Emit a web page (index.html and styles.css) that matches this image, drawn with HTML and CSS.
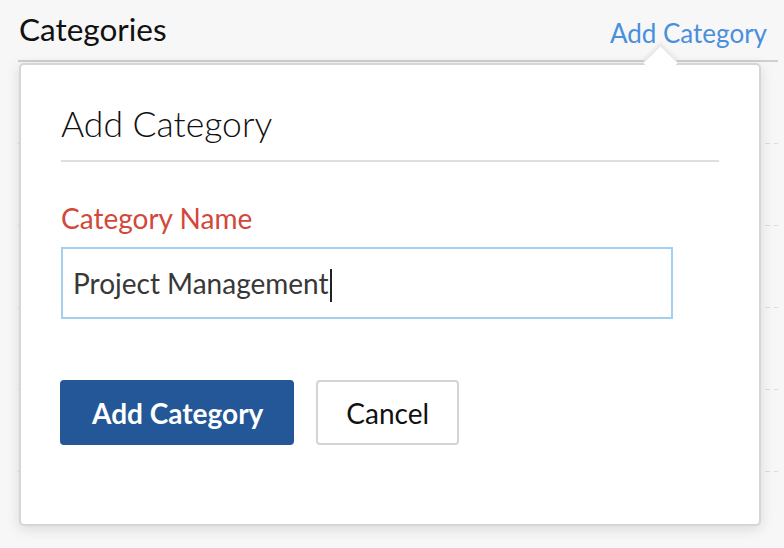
FILE: index.html
```html
<!DOCTYPE html>
<html lang="en">
<head>
<meta charset="utf-8">
<title>Categories</title>
<link rel="stylesheet" href="styles.css">
</head>
<body>
<div class="page">
  <header class="header">
    <h1 class="title">Categories</h1>
    <a class="add-link" href="#">Add Category</a>
  </header>
  <div class="content">
    <ul class="rows">
      <li class="row"></li>
      <li class="row"></li>
      <li class="row"></li>
      <li class="row"></li>
      <li class="row"></li>
    </ul>
    <div class="popover">
      <span class="arrow"></span>
      <h2 class="pop-title">Add Category</h2>
      <div class="field">
        <label class="label">Category Name</label>
        <div class="input">Project Management<span class="caret"></span></div>
      </div>
      <div class="actions">
        <button class="btn btn-primary" type="button">Add Category</button>
        <button class="btn btn-default" type="button">Cancel</button>
      </div>
    </div>
  </div>
</div>
</body>
</html>
```
FILE: styles.css
```css
html, body {
  margin: 0;
  padding: 0;
}
body {
  background: #f7f7f7;
  font-family: "Lato", "Liberation Sans", sans-serif;
  width: 784px;
  height: 548px;
  overflow: hidden;
}
.page {
  padding: 0 6px 0 18px;
}
.header {
  display: flex;
  justify-content: space-between;
  align-items: flex-start;
  height: 60px;
  border-bottom: 2px solid #cfcfcf;
  padding: 0 11px 0 1px;
  box-sizing: content-box;
}
.title {
  margin: 0;
  font-size: 31.5px;
  font-weight: 400;
  color: #111;
  line-height: 36px;
  padding-top: 11px;
}
.add-link {
  font-size: 26px;
  color: #4a8fdb;
  text-decoration: none;
  line-height: 30px;
  padding-top: 18px;
}
.content {
  position: relative;
}
.rows {
  list-style: none;
  margin: 0;
  padding: 0;
}
.row {
  height: 81px;
  background: repeating-linear-gradient(90deg, #dcdcdc 0 5px, transparent 5px 9px) bottom left / 100% 1px no-repeat;
  padding-bottom: 1px;
}
.popover {
  position: absolute;
  top: 1px;
  left: 1px;
  width: 738px;
  height: 459px;
  box-sizing: content-box;
  background: #fff;
  border: 2px solid #d6d6d6;
  border-radius: 5px;
  box-shadow: 0 3px 14px rgba(0, 0, 0, 0.12);
  padding: 0;
}
.arrow {
  position: absolute;
  top: -15px;
  left: 627px;
  width: 25px;
  height: 25px;
  background: #fff;
  transform: rotate(45deg);
  box-shadow: -2px -2px 4px rgba(0, 0, 0, 0.06);
  border-top: 1px solid #e2e2e2;
  border-left: 1px solid #e2e2e2;
  box-sizing: border-box;
}
.pop-title {
  position: relative;
  margin: 38px 40px 0;
  padding-bottom: 15px;
  border-bottom: 2px solid #dedede;
  font-size: 35.5px;
  font-weight: 300;
  color: #111;
  line-height: 42px;
}
.field {
  margin: 41px 40px 0;
}
.label {
  display: block;
  font-size: 28px;
  color: #d2483a;
  line-height: 31px;
}
.input {
  margin-top: 13px;
  width: 612px;
  height: 72px;
  box-sizing: border-box;
  border: 2px solid #a3cff0;
  padding: 0 10px;
  font-size: 28px;
  color: #383838;
  display: flex;
  align-items: center;
}
.caret {
  display: inline-block;
  width: 2px;
  height: 33px;
  background: #222;
  margin-left: 1px;
  margin-top: 4px;
}
.actions {
  display: flex;
  gap: 22px;
  margin: 61px 40px 0 39px;
}
.btn {
  font-family: "Lato", "Liberation Sans", sans-serif;
  height: 65px;
  border-radius: 4px;
  padding: 0 30px;
  font-size: 28px;
  border: 2px solid transparent;
  cursor: pointer;
}
.btn-primary {
  background: #235797;
  border-color: #235797;
  color: #fff;
  font-weight: 700;
  padding: 0 29px 0 30px;
}
.btn-default {
  background: #fff;
  border-color: #d4d4d4;
  color: #111;
  padding: 0 28px;
}
```
